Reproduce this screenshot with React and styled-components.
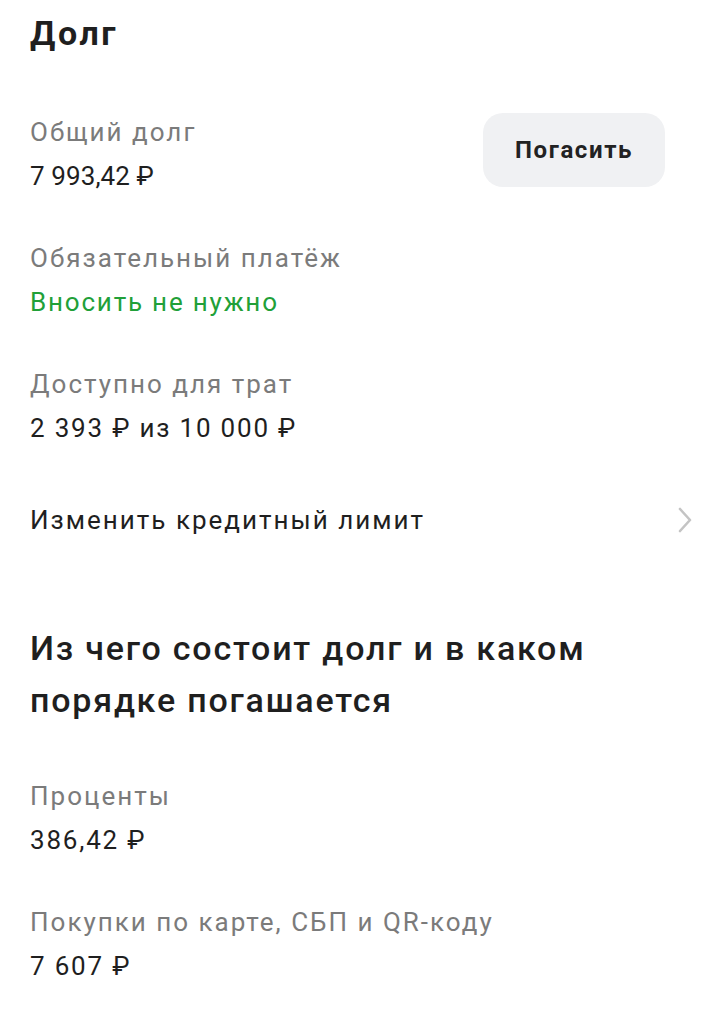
import styled, { createGlobalStyle } from "styled-components";

const GlobalStyle = createGlobalStyle`
  body {
    margin: 0;
    background: #ffffff;
    font-family: Roboto, "Noto Sans", sans-serif;
    color: #1f1f1f;
  }
`;

const Page = styled.div`
  width: 705px;
  padding: 13px 0 0 30px;
  box-sizing: border-box;
`;

const Title = styled.h1`
  margin: 0 0 57px;
  font-size: 34px;
  line-height: 40px;
  font-weight: 700;
  letter-spacing: 2.6px;
  color: #1f1f1f;
`;

const Group = styled.div`
  display: flex;
  align-items: center;
  justify-content: space-between;
  padding-right: 40px;
  margin-bottom: ${(p) => p.gap || 38}px;
`;

const Label = styled.div`
  font-size: 26px;
  line-height: 44px;
  letter-spacing: 2px;
  color: #7b7b7b;
`;

const Value = styled.div`
  font-size: 26px;
  line-height: 44px;
  letter-spacing: ${(p) => (p.tight ? 0.1 : 1.8)}px;
  color: ${(p) => (p.green ? "#21a038" : "#1f1f1f")};
`;

const PayButton = styled.button`
  width: 182px;
  height: 74px;
  margin-top: -8px;
  border: none;
  border-radius: 20px;
  background: #f0f1f3;
  font-family: Roboto, sans-serif;
  font-size: 24px;
  font-weight: 700;
  letter-spacing: 1.6px;
  color: #222;
  cursor: pointer;
`;

const LinkRow = styled.div`
  display: flex;
  align-items: center;
  justify-content: space-between;
  padding-right: 12px;
  margin-bottom: 80px;
  font-size: 26px;
  line-height: 44px;
  letter-spacing: 2px;
  color: #1f1f1f;
`;

const Heading = styled.h2`
  margin: 0 0 48px;
  font-size: 34px;
  line-height: 52px;
  font-weight: 500;
  letter-spacing: 1.8px;
  color: #1f1f1f;
`;

const Chevron = () => (
  <svg width="16" height="28" viewBox="0 0 16 28" fill="none">
    <path d="M3 3l10 11L3 25" stroke="#c4c4c4" strokeWidth="2.6" strokeLinecap="round" strokeLinejoin="round" />
  </svg>
);

const Item = ({ label, value, green, tight }) => (
  <div>
    <Label>{label}</Label>
    <Value green={green} tight={tight}>{value}</Value>
  </div>
);

export default function App() {
  return (
    <Page>
      <GlobalStyle />
      <Title>Долг</Title>
      <Group>
        <Item label="Общий долг" value="7 993,42 ₽" tight />
        <PayButton>Погасить</PayButton>
      </Group>
      <Group>
        <Item label="Обязательный платёж" value="Вносить не нужно" green />
      </Group>
      <Group gap={48}>
        <Item label="Доступно для трат" value="2 393 ₽ из 10 000 ₽" />
      </Group>
      <LinkRow>
        <span>Изменить кредитный лимит</span>
        <Chevron />
      </LinkRow>
      <Heading>
        Из чего состоит долг и в каком
        <br />
        порядке погашается
      </Heading>
      <Group>
        <Item label="Проценты" value="386,42 ₽" />
      </Group>
      <Group>
        <Item label="Покупки по карте, СБП и QR-коду" value="7 607 ₽" />
      </Group>
    </Page>
  );
}
